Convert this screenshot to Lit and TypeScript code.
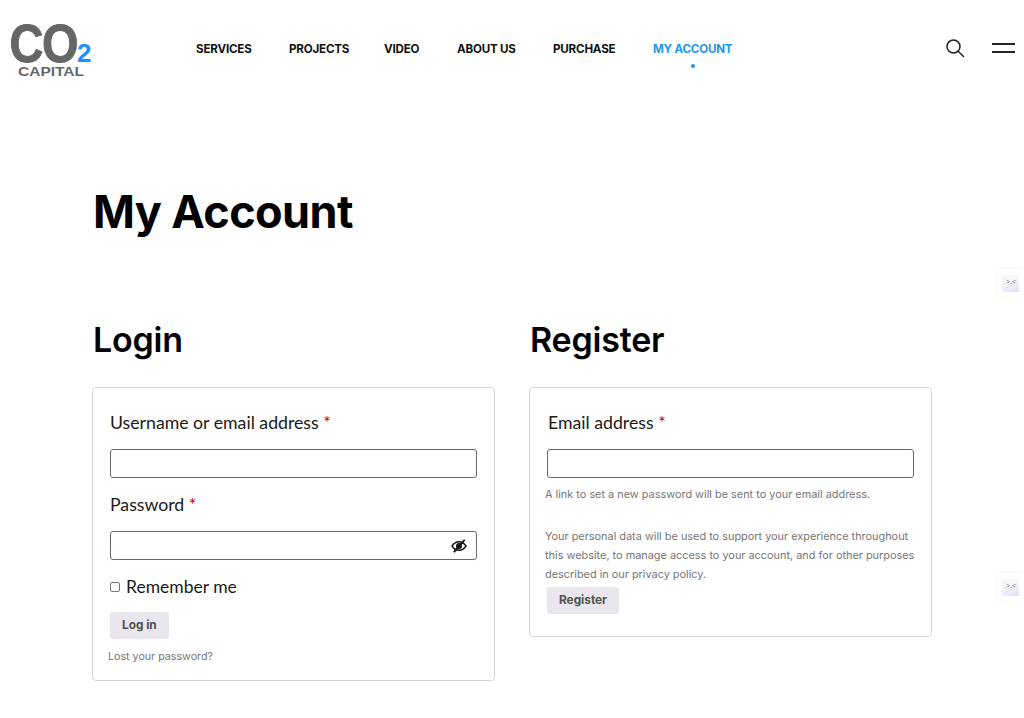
import { html, css, LitElement } from 'lit';
import { customElement } from 'lit/decorators.js';

// widths keep each link at the same start as the live site's own font metrics
const NAV = [
  { label: 'SERVICES', width: 56 },
  { label: 'PROJECTS', width: 58 },
  { label: 'VIDEO', width: 36 },
  { label: 'ABOUT US', width: 59 },
  { label: 'PURCHASE', width: 63 },
  { label: 'MY ACCOUNT', width: 80, active: true },
];

@customElement('app-root')
export class AppRoot extends LitElement {
  static styles = css`
    :host {
      display: block;
      position: relative;
      height: 718px;
      overflow: hidden;
      background: #fff;
      font-family: 'Inter', 'Liberation Sans', sans-serif;
      color: #000;
    }

    /* header */
    .header {
      display: flex;
      align-items: flex-start;
      height: 96px;
    }
    .logo {
      display: block;
      width: 106px;
      height: 90px;
      flex: none;
    }
    .logo text {
      font-family: 'Liberation Sans', sans-serif;
      font-weight: 700;
    }
    .nav {
      display: flex;
      gap: 37px;
      margin: 42px 0 0 90px;
      list-style: none;
      padding: 0;
      font-size: 11.6px;
      font-weight: 700;
      line-height: 14px;
      letter-spacing: -0.2px;
      color: #111;
    }
    .nav li {
      position: relative;
      white-space: nowrap;
    }
    .nav .active {
      color: #1e96f0;
    }
    .nav .active::after {
      content: '';
      position: absolute;
      left: 50%;
      top: 22px;
      width: 4px;
      height: 4px;
      margin-left: -2px;
      border-radius: 50%;
      background: #1e96f0;
    }
    .tools {
      display: flex;
      align-items: center;
      gap: 27px;
      margin: 38px 0 0 auto;
      padding-right: 9px;
    }
    .tools svg {
      display: block;
    }

    /* page */
    .page {
      padding: 90px 0 0 93px;
    }
    h1 {
      margin: 0;
      font-size: 45px;
      line-height: 52px;
      font-weight: 700;
      letter-spacing: -0.6px;
    }
    .cols {
      display: grid;
      grid-template-columns: 403px 403px;
      gap: 34px;
      margin: 80px 0 0 -1px;
      align-items: start;
    }
    h2 {
      margin: 0 0 25px 1px;
      font-size: 34px;
      line-height: 44px;
      font-weight: 600;
      letter-spacing: -0.2px;
    }
    .box {
      box-sizing: border-box;
      border: 1px solid #d6d3dc;
      border-radius: 4px;
      padding: 22px 17px 14px;
    }
    label.field {
      display: block;
      font-family: 'Lato', 'Liberation Sans', sans-serif;
      font-size: 17.7px;
      line-height: 26px;
      color: #1a1a1a;
      margin-bottom: 13px;
    }
    .req {
      color: #a00;
    }
    .input {
      position: relative;
      box-sizing: border-box;
      height: 29px;
      border: 1px solid #6f6468;
      border-radius: 3px;
      margin-bottom: 14px;
    }
    .eye {
      position: absolute;
      right: 9px;
      top: 7px;
    }
    .remember {
      display: flex;
      align-items: center;
      gap: 6px;
      font-family: 'Lato', 'Liberation Sans', sans-serif;
      font-size: 17.5px;
      line-height: 26px;
      color: #1a1a1a;
      margin-bottom: 12px;
    }
    .check {
      box-sizing: border-box;
      width: 10px;
      height: 10px;
      border: 1px solid #767676;
      border-radius: 2px;
    }
    .btn {
      display: inline-block;
      padding: 0 12px;
      height: 27px;
      line-height: 27px;
      border-radius: 3px;
      background: #e9e6ed;
      color: #515151;
      font-size: 11.8px;
      font-weight: 700;
    }
    .small {
      font-size: 10.9px;
      line-height: 19px;
      color: #767676;
      margin: 0;
      white-space: nowrap;
    }
    .lost {
      font-size: 10.7px;
      margin: 8px 0 0 -2px;
    }
    .register {
      padding: 22px 17px 22px 17px;
    }
    .register label.field {
      margin-left: 1px;
    }
    .register .input {
      margin-bottom: 7px;
    }
    .register .small {
      margin-left: -2px;
    }
    .register .hint {
      margin-bottom: 23px;
    }
    .register .btn {
      margin-top: 3px;
    }

    /* floating side widgets */
    .widget {
      position: absolute;
      right: 0;
      width: 26px;
      height: 28px;
      box-shadow: 0 0 4px rgba(150, 140, 190, 0.12);
      display: flex;
      align-items: center;
      justify-content: center;
    }
    .widget span {
      display: block;
      width: 17px;
      height: 17px;
      margin-right: 1px;
      background: linear-gradient(160deg, #f6f5f9 40%, #e6dcf6);
      color: #777;
      font-size: 7px;
      line-height: 14px;
      text-align: center;
      font-family: 'Liberation Mono', monospace;
      letter-spacing: -1px;
    }
  `;

  render() {
    return html`
      <header class="header">
        <svg class="logo" viewBox="0 0 106 90" aria-label="CO2 Capital">
          <text transform="translate(9.500 61.500) scale(0.87 1)" font-size="54" letter-spacing="-1.500" fill="#666" stroke="#666" stroke-width="1">CO</text>
          <text x="77" y="62" font-size="26" fill="#1e90ff">2</text>
          <text x="18" y="76" font-size="12.500" textLength="66" lengthAdjust="spacingAndGlyphs" fill="#666">CAPITAL</text>
        </svg>
        <ul class="nav">
          ${NAV.map(item => html`<li class=${item.active ? 'active' : ''} style="width: ${item.width}px">${item.label}</li>`)}
        </ul>
        <div class="tools">
          <svg width="20" height="20" viewBox="0 0 20 20" fill="none" stroke="#222" stroke-width="1.5">
            <circle cx="8.5" cy="8.5" r="6.5" />
            <path d="M13.2 13.2 18.5 18.5" stroke-linecap="round" />
          </svg>
          <svg width="23" height="10" viewBox="0 0 23 10" fill="none" stroke="#222" stroke-width="2">
            <path d="M0 1H23M0 9H23" />
          </svg>
        </div>
      </header>

      <main class="page">
        <h1>My Account</h1>
        <div class="cols">
          <section>
            <h2>Login</h2>
            <div class="box">
              <label class="field">Username or email address <span class="req">*</span></label>
              <div class="input"></div>
              <label class="field">Password <span class="req">*</span></label>
              <div class="input">
                <svg class="eye" width="16" height="14" viewBox="0 0 17 15" fill="none" stroke="#111">
                  <path d="M1 7.5C3 4.500 5.500 3 8.500 3S14 4.500 16 7.500C14 10.500 11.500 12 8.500 12S3 10.500 1 7.500Z" stroke-width="1.500" />
                  <circle cx="8.500" cy="7.500" r="3.200" fill="#111" stroke="none" />
                  <path d="M3 14 14.500 1" stroke-width="2" />
                </svg>
              </div>
              <div class="remember"><span class="check"></span>Remember me</div>
              <span class="btn">Log in</span>
              <p class="small lost">Lost your password?</p>
            </div>
          </section>
          <section>
            <h2>Register</h2>
            <div class="box register">
              <label class="field">Email address <span class="req">*</span></label>
              <div class="input"></div>
              <p class="small hint">A link to set a new password will be sent to your email address.</p>
              <p class="small">
                Your personal data will be used to support your experience throughout<br />
                this website, to manage access to your account, and for other purposes<br />
                described in our privacy policy.
              </p>
              <span class="btn">Register</span>
            </div>
          </section>
        </div>
      </main>

      <div class="widget" style="top: 269px"><span>&gt;.&lt;</span></div>
      <div class="widget" style="top: 573px"><span>&gt;.&lt;</span></div>
    `;
  }
}
